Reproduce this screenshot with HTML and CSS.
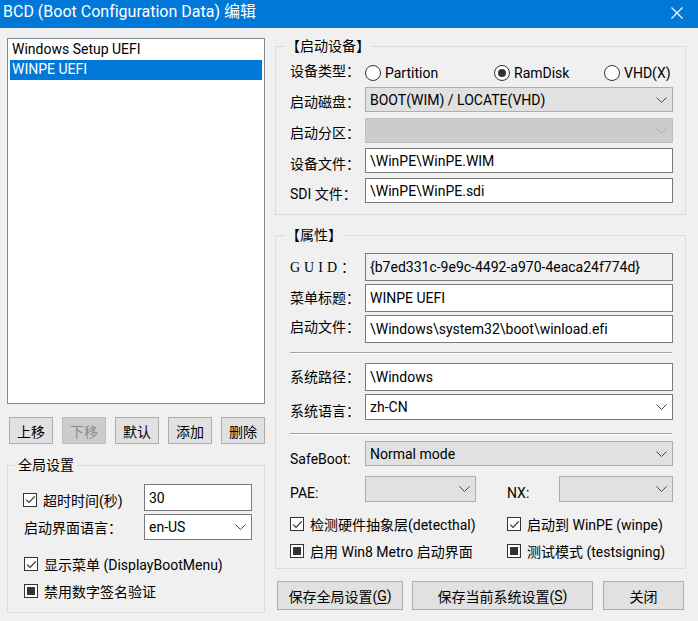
FILE: index.html
```html
<!DOCTYPE html>
<html lang="zh-CN">
<head>
<meta charset="utf-8">
<title>BCD (Boot Configuration Data) 编辑</title>
<link rel="stylesheet" href="styles.css">
</head>
<body>
<header class="titlebar">
  <span class="title">BCD (Boot Configuration Data) 编辑</span>
  <span class="close" aria-label="关闭">
    <svg width="12" height="12" viewBox="0 0 12 12"><path d="M0.5 0.5L11.5 11.5M11.5 0.5L0.5 11.5" stroke="#fff" stroke-width="1.1" fill="none"/></svg>
  </span>
</header>
<main class="main">
  <section class="left">
    <div class="listbox">
      <div class="item">Windows Setup UEFI</div>
      <div class="item selected">WINPE UEFI</div>
    </div>
    <div class="listbtns">
      <button class="btn sq">上移</button>
      <button class="btn sq" disabled>下移</button>
      <button class="btn sq">默认</button>
      <button class="btn sq">添加</button>
      <button class="btn sq">删除</button>
    </div>
    <fieldset class="group gglobal">
      <legend>全局设置</legend>
      <div class="grow g1">
        <label class="check dn2"><span class="box"><svg width="11" height="11" viewBox="0 0 11 11"><path d="M1.2 5.6L4 8.4L9.8 2.4" fill="none" stroke="#333" stroke-width="1.2"/></svg></span>超时时间(秒)</label>
        <div class="edit">30</div>
      </div>
      <div class="grow g2">
        <span class="lbl dn1">启动界面语言：</span>
        <div class="combo white"><span>en-US</span><svg class="chev" width="11" height="6" viewBox="0 0 11 6"><path d="M0.5 0.5L5.5 5.5L10.5 0.5" fill="none" stroke="#444" stroke-width="1"/></svg></div>
      </div>
      <div class="crow c1"><label class="check"><span class="box"><svg width="11" height="11" viewBox="0 0 11 11"><path d="M1.2 5.6L4 8.4L9.8 2.4" fill="none" stroke="#333" stroke-width="1.2"/></svg></span>显示菜单 (DisplayBootMenu)</label></div>
      <div class="crow c2"><label class="check"><span class="box ind"></span>禁用数字签名验证</label></div>
    </fieldset>
  </section>

  <section class="right">
    <fieldset class="group gdev">
      <legend>【启动设备】</legend>
      <div class="frow r-type">
        <span class="lbl up1">设备类型：</span>
        <div class="radios">
          <label class="ropt o1"><span class="radio"></span>Partition</label>
          <label class="ropt o2"><span class="radio on"></span>RamDisk</label>
          <label class="ropt o3"><span class="radio"></span>VHD(X)</label>
        </div>
      </div>
      <div class="frow r-disk">
        <span class="lbl dn2">启动磁盘：</span>
        <div class="combo"><span>BOOT(WIM) / LOCATE(VHD)</span><svg class="chev" width="11" height="6" viewBox="0 0 11 6"><path d="M0.5 0.5L5.5 5.5L10.5 0.5" fill="none" stroke="#444" stroke-width="1"/></svg></div>
      </div>
      <div class="frow r-part">
        <span class="lbl dn2">启动分区：</span>
        <div class="combo disabled"><span></span><svg class="chev" width="11" height="6" viewBox="0 0 11 6"><path d="M0.5 0.5L5.5 5.5L10.5 0.5" fill="none" stroke="#a8a8a8" stroke-width="1"/></svg></div>
      </div>
      <div class="frow r-file">
        <span class="lbl dn3">设备文件：</span>
        <div class="edit">\WinPE\WinPE.WIM</div>
      </div>
      <div class="frow r-sdi">
        <span class="lbl dn3">SDI 文件：</span>
        <div class="edit">\WinPE\WinPE.sdi</div>
      </div>
    </fieldset>

    <fieldset class="group gprop">
      <legend>【属性】</legend>
      <div class="frow tall r-guid">
        <span class="lbl"><span class="guid">GUID</span>：</span>
        <div class="edit ro">{b7ed331c-9e9c-4492-a970-4eaca24f774d}</div>
      </div>
      <div class="frow tall r-gap3">
        <span class="lbl">菜单标题：</span>
        <div class="edit">WINPE UEFI</div>
      </div>
      <div class="frow tall r-gap3">
        <span class="lbl up2">启动文件：</span>
        <div class="edit">\Windows\system32\boot\winload.efi</div>
      </div>
      <div class="sep s1"></div>
      <div class="frow tall r-path">
        <span class="lbl">系统路径：</span>
        <div class="edit">\Windows</div>
      </div>
      <div class="frow r-lang">
        <span class="lbl dn4">系统语言：</span>
        <div class="combo white"><span>zh-CN</span><svg class="chev" width="11" height="6" viewBox="0 0 11 6"><path d="M0.5 0.5L5.5 5.5L10.5 0.5" fill="none" stroke="#444" stroke-width="1"/></svg></div>
      </div>
      <div class="sep s2"></div>
      <div class="frow r-safe">
        <span class="lbl dn5">SafeBoot:</span>
        <div class="combo"><span>Normal mode</span><svg class="chev" width="11" height="6" viewBox="0 0 11 6"><path d="M0.5 0.5L5.5 5.5L10.5 0.5" fill="none" stroke="#444" stroke-width="1"/></svg></div>
      </div>
      <div class="pae-row">
        <span class="lbl dn4">PAE:</span>
        <div class="combo"><span></span><svg class="chev" width="11" height="6" viewBox="0 0 11 6"><path d="M0.5 0.5L5.5 5.5L10.5 0.5" fill="none" stroke="#444" stroke-width="1"/></svg></div>
        <span></span>
        <span class="lbl dn4">NX:</span>
        <div class="combo"><span></span><svg class="chev" width="11" height="6" viewBox="0 0 11 6"><path d="M0.5 0.5L5.5 5.5L10.5 0.5" fill="none" stroke="#444" stroke-width="1"/></svg></div>
      </div>
      <div class="chk-row k1">
        <label class="check"><span class="box"><svg width="11" height="11" viewBox="0 0 11 11"><path d="M1.2 5.6L4 8.4L9.8 2.4" fill="none" stroke="#333" stroke-width="1.2"/></svg></span>检测硬件抽象层(detecthal)</label>
        <label class="check"><span class="box"><svg width="11" height="11" viewBox="0 0 11 11"><path d="M1.2 5.6L4 8.4L9.8 2.4" fill="none" stroke="#333" stroke-width="1.2"/></svg></span>启动到 WinPE (winpe)</label>
      </div>
      <div class="chk-row k2">
        <label class="check"><span class="box ind"></span>启用 Win8 Metro 启动界面</label>
        <label class="check"><span class="box ind"></span>测试模式 (testsigning)</label>
      </div>
    </fieldset>

    <div class="actions">
      <button class="btn big w1">保存全局设置(<u>G</u>)</button>
      <button class="btn big w2">保存当前系统设置(<u>S</u>)</button>
      <button class="btn big w3">关闭</button>
    </div>
  </section>
</main>
</body>
</html>
```

FILE: styles.css
```css
* { box-sizing: border-box; }
html, body { margin: 0; padding: 0; }
body {
  width: 698px;
  height: 621px;
  overflow: hidden;
  background: #f0f0f0;
  font-family: Roboto, "Noto Sans CJK SC", sans-serif;
  font-size: 14px;
  font-variant-ligatures: none;
  color: #000;
}

/* title bar */
.titlebar {
  height: 28px;
  background: #0078d7;
  color: #fff;
  display: flex;
  justify-content: space-between;
  align-items: flex-start;
}
.title { padding-left: 3px; line-height: 24px; font-size: 16px; white-space: nowrap; }
.close { width: 42px; height: 25px; display: flex; align-items: center; justify-content: center; }

/* layout */
.main { display: flex; gap: 10px; padding: 9px 0 0 7px; }
.left { width: 258px; display: flex; flex-direction: column; }
.right { width: 411px; display: flex; flex-direction: column; }

/* list */
.listbox {
  margin-top: 1px;
  height: 366px;
  background: #fff;
  border: 1px solid #828790;
  padding: 1px 2px;
}
.item { height: 20px; line-height: 18px; padding-left: 2px; white-space: nowrap; }
.item.selected { background: #0078d7; color: #fff; }

/* buttons */
.btn {
  font: inherit;
  font-variant-ligatures: none;
  color: #000;
  background: #e1e1e1;
  border: 1px solid #adadad;
  padding: 0;
  margin: 0;
  display: flex;
  align-items: center;
  justify-content: center;
  white-space: nowrap;
}
.btn u { text-underline-offset: 2px; }
.btn:disabled { background: #cccccc; border-color: #bfbfbf; color: #8d8d8d; }
.listbtns { display: flex; gap: 9px; margin-top: 13px; padding-left: 2px; }
.btn.sq { width: 44px; height: 27px; }
.actions { display: flex; margin-top: 12px; padding-left: 2px; }
.btn.big { height: 29px; }
.btn.w1 { width: 126px; }
.btn.w2 { width: 181px; margin-left: 9px; }
.btn.w3 { width: 81px; margin-left: 10px; }

/* group boxes */
.group { margin: 0; border: 1px solid #dcdcdc; min-width: 0; }
.group legend { height: 18px; line-height: 18px; white-space: nowrap; }
.gglobal { margin-top: 12px; padding: 10px 0 11px 15px; }
.gglobal legend { padding: 0 3px; margin-left: -8px; }
.gdev { padding: 5px 12px 11px 14px; }
.gprop { margin-top: 11px; padding: 9px 12px 7px 14px; }
.gdev legend, .gprop legend { padding: 0 1px; margin-left: -5px; }

/* generic controls */
.lbl { white-space: nowrap; line-height: 18px; }
.dn1 { padding-top: 2px; }
.dn2 { padding-top: 4px; }
.dn3 { padding-top: 6px; }
.dn4 { padding-top: 8px; }
.dn5 { padding-top: 11px; }
.up1 { padding-bottom: 3px; }
.up2 { padding-bottom: 4px; }

.edit {
  background: #fff;
  border: 1px solid #7a7a7a;
  padding-left: 4px;
  display: flex;
  align-items: center;
  white-space: nowrap;
  overflow: hidden;
}
.edit.ro { background: #f0f0f0; }

.combo {
  background: #e1e1e1;
  border: 1px solid #adadad;
  padding: 0 5px 0 4px;
  display: flex;
  align-items: center;
  justify-content: space-between;
  white-space: nowrap;
}
.combo.white { background: #fff; border-color: #7a7a7a; }
.combo.disabled { background: #cccccc; border-color: #bfbfbf; }
.chev { flex: none; }

.check { display: flex; align-items: center; white-space: nowrap; }
.box {
  flex: none;
  width: 14px;
  height: 14px;
  border: 1px solid #333;
  background: #fff;
  margin-right: 6px;
  display: flex;
  align-items: center;
  justify-content: center;
}
.box.ind::after { content: ""; width: 8px; height: 8px; background: #333; }

.radio {
  flex: none;
  width: 16px;
  height: 16px;
  border: 1px solid #333;
  border-radius: 50%;
  background: #fff;
  margin-right: 4px;
  display: flex;
  align-items: center;
  justify-content: center;
}
.radio.on::after { content: ""; width: 8px; height: 8px; border-radius: 50%; background: #333; }

/* global settings rows */
.grow { display: grid; grid-template-columns: 121px 108px; align-items: center; }
.grow.g1 { height: 27px; }
.grow.g1 .edit { height: 27px; }
.grow.g2 { height: 26px; margin-top: 3px; }
.grow.g2 .lbl { padding-left: 1px; }
.grow.g2 .combo { height: 26px; }
.crow { height: 20px; display: flex; align-items: center; padding-left: 1px; }
.crow.c1 { margin-top: 14px; }
.crow.c2 { margin-top: 7px; }

/* right rows */
.frow { display: flex; align-items: center; height: 25px; }
.frow > .lbl { width: 75px; flex: none; }
.frow > .edit, .frow > .combo, .frow > .radios { flex: 1; height: 100%; }
.frow.tall { height: 28px; }
.r-disk { margin-top: 2px; }
.r-part { margin-top: 6px; }
.r-file, .r-sdi { margin-top: 5px; }
.r-gap3 { margin-top: 3px; }
.r-path { margin-top: 9px; }
.r-lang { margin-top: 3px; height: 26px; }
.r-safe { margin-top: 6px; }

.radios { display: flex; align-items: center; }
.ropt { display: flex; align-items: center; }
.ropt.o1 { width: 129px; }
.ropt.o2 { width: 110px; }

.guid { font-family: "Liberation Serif", serif; letter-spacing: 4px; }

.sep { height: 2px; border-top: 1px solid #a0a0a0; border-bottom: 1px solid #fff; margin-right: 1px; }
.sep.s1 { margin-top: 9px; }
.sep.s2 { margin-top: 13px; }

.pae-row {
  display: grid;
  grid-template-columns: 75px 111px 31px 52px 114px;
  align-items: center;
  height: 26px;
  margin-top: 10px;
}
.pae-row .combo { height: 26px; }

.chk-row { display: grid; grid-template-columns: 217px 1fr; height: 20px; align-items: center; }
.chk-row.k1 { margin-top: 12px; }
.chk-row.k2 { margin-top: 7px; }
```
